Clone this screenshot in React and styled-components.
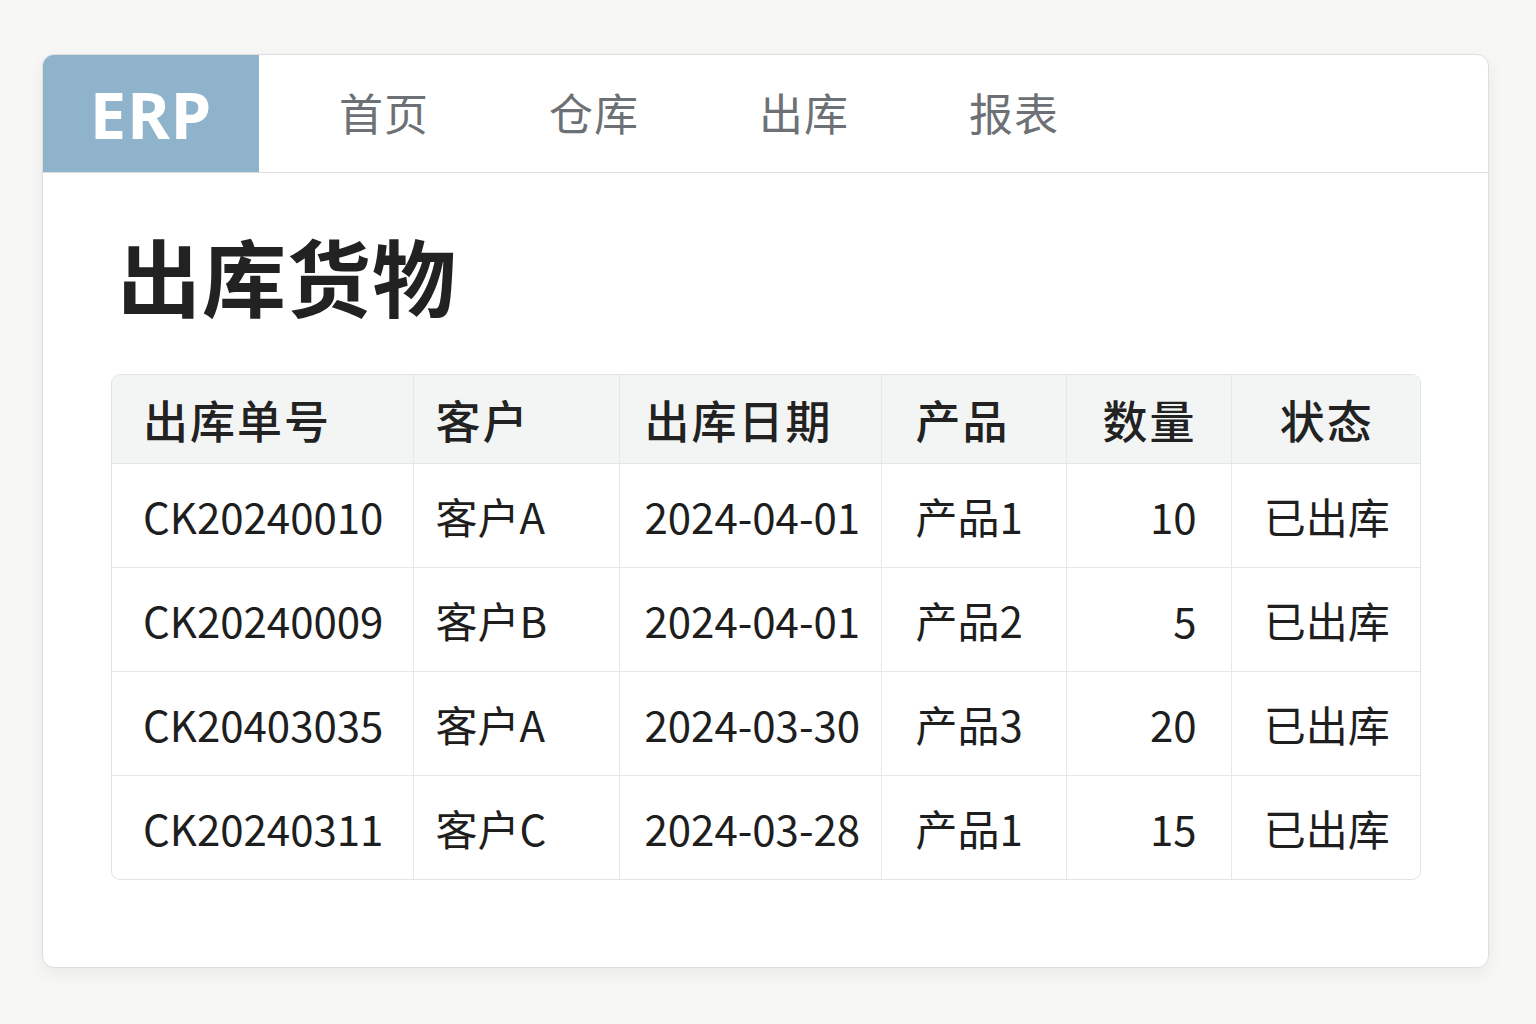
import styled, { createGlobalStyle } from "styled-components";

const GlobalStyle = createGlobalStyle`
  html, body {
    margin: 0;
    padding: 0;
    background: #f7f7f5;
    font-family: "Noto Sans CJK SC", "Noto Sans", sans-serif;
  }
`;

const Page = styled.div`
  padding: 54px 47px 56px 42px;
`;

const Card = styled.div`
  width: 1447px;
  height: 914px;
  box-sizing: border-box;
  background: #ffffff;
  border: 1px solid #dedede;
  border-radius: 12px;
  box-shadow: 0 6px 18px rgba(0, 0, 0, 0.06);
  overflow: hidden;
  display: flex;
  flex-direction: column;
`;

const TopBar = styled.div`
  height: 117px;
  display: flex;
  align-items: center;
  border-bottom: 1px solid #dcdfe1;
  flex-shrink: 0;
`;

const Logo = styled.div`
  width: 216px;
  height: 100%;
  background: #8fb3cb;
  color: #ffffff;
  font-family: "Noto Sans", sans-serif;
  font-weight: 700;
  font-size: 65px;
  display: flex;
  align-items: center;
  justify-content: center;
  letter-spacing: 1px;
`;

const Nav = styled.nav`
  display: flex;
  align-items: center;
  gap: 120px;
  padding-left: 80px;
  padding-bottom: 4px;
`;

const NavItem = styled.a`
  font-size: 44px;
  color: #6d7175;
  text-decoration: none;
  letter-spacing: 1px;
`;

const Content = styled.div`
  padding: 42px 67px 0 68px;
`;

const Title = styled.h1`
  margin: 0 0 39px 6px;
  font-size: 84px;
  line-height: 120px;
  font-weight: 700;
  color: #222222;
  letter-spacing: 1px;
`;

const TableWrap = styled.div`
  border: 1px solid #dfe3e5;
  border-radius: 9px;
  overflow: hidden;
`;

const Table = styled.table`
  width: 100%;
  border-collapse: collapse;
  table-layout: fixed;
`;

const Th = styled.th`
  height: 88px;
  background: #f3f5f5;
  font-size: 45px;
  font-weight: 500;
  color: #222222;
  text-align: ${(p) => p.$align || "left"};
  padding: 0 ${(p) => p.$pr || 0}px 0 ${(p) => p.$pl || 0}px;
  border-left: 1px solid #e3e7e9;
  border-bottom: 1px solid #e3e7e9;
  letter-spacing: 2px;
  &:first-child {
    border-left: none;
  }
`;

const Td = styled.td`
  height: 103px;
  font-size: 42px;
  color: #1e1e1e;
  text-align: ${(p) => p.$align || "left"};
  padding: 0 ${(p) => p.$pr || 0}px 0 ${(p) => p.$pl || 0}px;
  border-left: 1px solid #e6e9eb;
  border-top: 1px solid #e6e9eb;
  white-space: nowrap;
  &:first-child {
    border-left: none;
  }
`;

const columns = [
  { key: "id", label: "出库单号", width: 301, pl: 31 },
  { key: "customer", label: "客户", width: 206, pl: 22 },
  { key: "date", label: "出库日期", width: 262, pl: 25 },
  { key: "product", label: "产品", width: 185, pl: 34 },
  { key: "qty", label: "数量", width: 165, pl: 0, pr: 34, align: "right" },
  { key: "status", label: "状态", width: 191, align: "center" },
];

const rows = [
  { id: "CK20240010", customer: "客户A", date: "2024-04-01", product: "产品1", qty: "10", status: "已出库" },
  { id: "CK20240009", customer: "客户B", date: "2024-04-01", product: "产品2", qty: "5", status: "已出库" },
  { id: "CK20403035", customer: "客户A", date: "2024-03-30", product: "产品3", qty: "20", status: "已出库" },
  { id: "CK20240311", customer: "客户C", date: "2024-03-28", product: "产品1", qty: "15", status: "已出库" },
];

const App = () => {
  return (
    <Page>
      <GlobalStyle />
      <Card>
        <TopBar>
          <Logo>ERP</Logo>
          <Nav>
            <NavItem>首页</NavItem>
            <NavItem>仓库</NavItem>
            <NavItem>出库</NavItem>
            <NavItem>报表</NavItem>
          </Nav>
        </TopBar>
        <Content>
          <Title>出库货物</Title>
          <TableWrap>
            <Table>
              <colgroup>
                {columns.map((c) => (
                  <col key={c.key} style={{ width: c.width }} />
                ))}
              </colgroup>
              <thead>
                <tr>
                  {columns.map((c) => (
                    <Th
                      key={c.key}
                      $align={c.align}
                      $pl={c.align === "right" ? 0 : c.pl}
                      $pr={c.pr}
                    >
                      {c.label}
                    </Th>
                  ))}
                </tr>
              </thead>
              <tbody>
                {rows.map((r) => (
                  <tr key={r.id}>
                    {columns.map((c) => (
                      <Td key={c.key} $align={c.align} $pl={c.pl} $pr={c.pr}>
                        {r[c.key]}
                      </Td>
                    ))}
                  </tr>
                ))}
              </tbody>
            </Table>
          </TableWrap>
        </Content>
      </Card>
    </Page>
  );
};

export default App;
